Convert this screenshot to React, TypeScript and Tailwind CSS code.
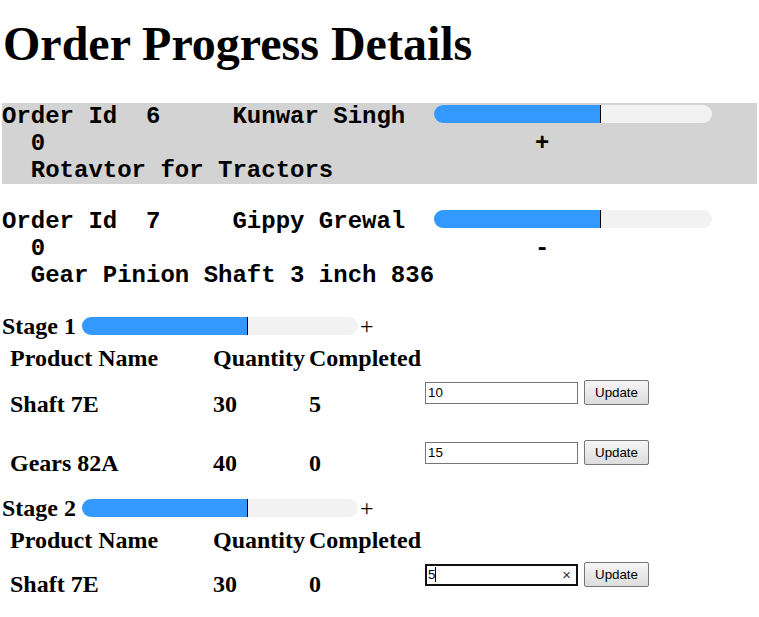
import React from "react";

function Bar({ w, pct }: { w: number; pct: number }) {
  return (
    <div
      className="flex h-[18px] overflow-hidden rounded-full bg-[#f2f2f2]"
      style={{ width: w }}
    >
      <div className="h-full bg-[#3399ff] border-r border-black" style={{ width: `${pct}%` }} />
    </div>
  );
}

function Order({ id, name, product, sign, gray }: { id: string; name: string; product: string; sign: string; gray?: boolean }) {
  return (
    <div
      className={`font-['Liberation_Mono',monospace] font-bold text-[24px] leading-[27px] whitespace-pre ${gray ? "bg-[#d3d3d3]" : ""}`}
    >
      <div className="flex items-start">
        <span>{`Order Id  ${id}     ${name}  `}</span>
        <div className="mt-[2px]">
          <Bar w={278} pct={60} />
        </div>
      </div>
      <div>{`  0                                  ${sign}`}</div>
      <div>{`  ${product}`}</div>
    </div>
  );
}

const ctl = "font-['Liberation_Sans',Arial,sans-serif] font-normal text-[13.33px] text-black";

function Field({ value }: { value: string }) {
  return (
    <div className="flex items-center">
      <input
        readOnly
        value={value}
        className={`w-[153px] h-[22px] border border-[#767676] bg-white px-[2px] outline-none ${ctl}`}
      />
      <button className={`ml-[6px] w-[65px] h-[25px] rounded-[2px] border border-[#767676] bg-gradient-to-b from-[#f6f6f6] to-[#dcdcdc] ${ctl}`}>
        Update
      </button>
    </div>
  );
}

function FocusedField({ value }: { value: string }) {
  return (
    <div className="flex items-center">
      <div className={`w-[153px] h-[22px] border border-[#111] outline outline-1 outline-[#111] -outline-offset-2 bg-white pl-[2px] pr-[6px] flex items-center ${ctl}`}>
        <span>{value}</span>
        <span className="w-px h-[15px] bg-black" />
        <span className="ml-auto text-[15px] leading-none text-[#333]">×</span>
      </div>
      <button className={`ml-[6px] w-[65px] h-[25px] rounded-[2px] border border-[#767676] bg-gradient-to-b from-[#f6f6f6] to-[#dcdcdc] ${ctl}`}>
        Update
      </button>
    </div>
  );
}

type Row = { name: string; qty: string; done: string; input: string; focused?: boolean; h: number; pt: number; mt: number };

function Stage({ label, rows, mt }: { label: string; rows: Row[]; mt: number }) {
  return (
    <div style={{ marginTop: mt }}>
      <div className="flex items-center h-[28px] text-[24px] font-bold">
        <span>{label}</span>
        <div className="ml-[6px]">
          <Bar w={276} pct={60} />
        </div>
        <span className="ml-[2px] font-normal">+</span>
      </div>
      <div className="pl-[8px] text-[24px] font-bold">
        <div className="grid grid-cols-[203px_96px_116px_auto] h-[28px] items-center">
          <div>Product Name</div>
          <div>Quantity</div>
          <div>Completed</div>
          <div />
        </div>
        {rows.map((r, i) => (
          <div
            key={i}
            className="grid grid-cols-[203px_96px_116px_auto]"
            style={{ height: r.h, marginTop: r.mt }}
          >
            <div className="self-center">{r.name}</div>
            <div className="self-center">{r.qty}</div>
            <div className="self-center">{r.done}</div>
            <div style={{ paddingTop: r.pt }}>
              {r.focused ? <FocusedField value={r.input} /> : <Field value={r.input} />}
            </div>
          </div>
        ))}
      </div>
    </div>
  );
}

export default function App() {
  return (
    <div className="min-h-screen bg-white text-black font-['Liberation_Serif','Times_New_Roman',serif] px-[2px]">
      <h1 className="text-[48px] font-bold leading-[55px] pt-[16px] pl-[1px]">Order Progress Details</h1>
      <div className="mt-[32px]">
        <Order id="6" name="Kunwar Singh" product="Rotavtor for Tractors" sign="+" gray />
        <div className="mt-[24px]">
          <Order id="7" name="Gippy Grewal" product="Gear Pinion Shaft 3 inch 836" sign="-" />
        </div>
      </div>
      <Stage
        label="Stage 1"
        mt={23}
        rows={[
          { name: "Shaft 7E", qty: "30", done: "5", input: "10", h: 62, pt: 7, mt: 5 },
          { name: "Gears 82A", qty: "40", done: "0", input: "15", h: 52, pt: 3, mt: 2 },
        ]}
      />
      <Stage
        label="Stage 2"
        mt={5}
        rows={[{ name: "Shaft 7E", qty: "30", done: "0", input: "5", focused: true, h: 58, pt: 7, mt: 5 }]}
      />
    </div>
  );
}
